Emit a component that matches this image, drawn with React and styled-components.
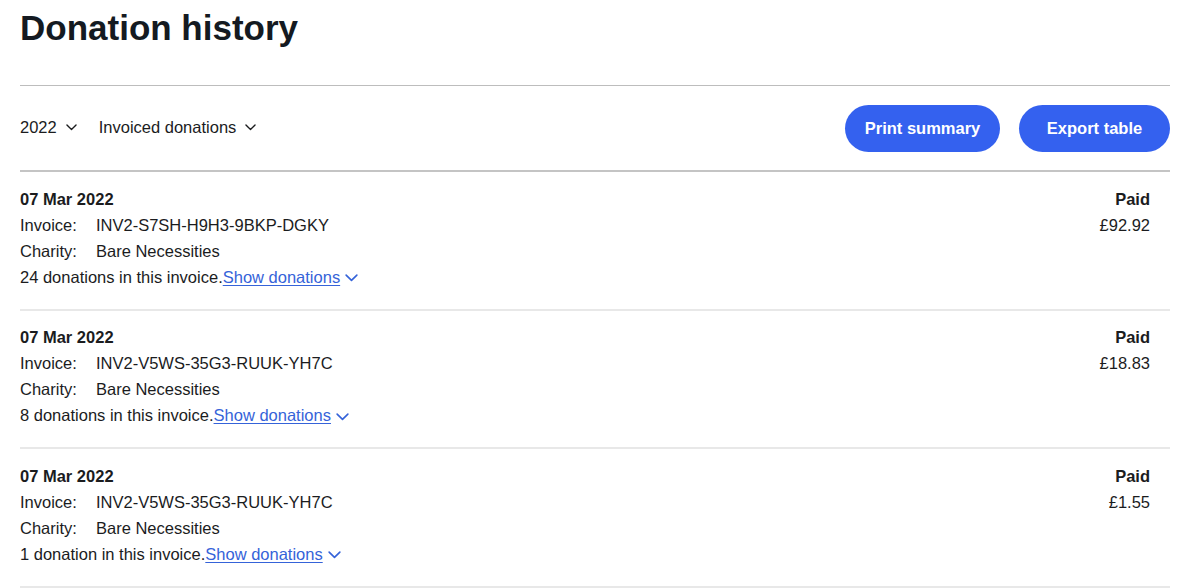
import React from 'react';
import styled, { createGlobalStyle } from 'styled-components';

const GlobalStyle = createGlobalStyle`
  html, body {
    margin: 0;
    padding: 0;
    background: #fff;
  }
  body {
    font-family: "Liberation Sans", Arial, sans-serif;
    color: #1b1c1e;
  }
`;

const Page = styled.div`
  padding: 0 30px 0 20px;
`;

const Title = styled.h1`
  margin: 0;
  padding-top: 7px;
  font-size: 35px;
  line-height: 42px;
  font-weight: 700;
  color: #141a21;
`;

const Toolbar = styled.div`
  margin-top: 36px;
  border-top: 1px solid #bdbdbd;
  border-bottom: 2px solid #c4c4c4;
  display: flex;
  align-items: center;
  justify-content: space-between;
  padding: 19px 0 18px;
`;

const Filters = styled.div`
  display: flex;
  align-items: center;
  gap: 22px;
  padding-bottom: 2px;
`;

const Filter = styled.button`
  display: flex;
  align-items: center;
  gap: 9px;
  border: 0;
  background: none;
  padding: 0;
  font-family: inherit;
  font-size: 16.5px;
  color: #1b1c1e;
  cursor: pointer;
`;

const Actions = styled.div`
  display: flex;
  gap: 19px;
`;

const PillButton = styled.button`
  height: 47px;
  padding: 0;
  border: 0;
  border-radius: 24px;
  background: #3461ef;
  color: #fff;
  font-family: inherit;
  font-size: 16.5px;
  font-weight: 700;
  white-space: nowrap;
  cursor: pointer;
  width: ${({ $w }) => $w}px;
`;

const Row = styled.div`
  display: flex;
  justify-content: space-between;
  padding: 13.5px 20px 19px 0;
  border-bottom: 2px solid #e8e8e8;
  font-size: 16.5px;
  line-height: 26px;
`;

const Details = styled.div`
  display: flex;
  flex-direction: column;
`;

const DateLine = styled.div`
  font-weight: 700;
`;

const Field = styled.div`
  display: flex;
`;

const Label = styled.span`
  width: 76px;
`;

const Link = styled.a`
  color: #3563d9;
  text-decoration: underline;
  text-underline-offset: 2px;
  cursor: pointer;
`;

const LinkChevron = styled.span`
  display: inline-flex;
  margin-left: 5px;
  vertical-align: middle;
  color: #3563d9;
`;

const Amount = styled.div`
  display: flex;
  flex-direction: column;
  align-items: flex-end;
`;

const Status = styled.div`
  font-weight: 700;
`;

const Chevron = ({ size = 12, color = 'currentColor' }) => (
  <svg width={size} height={size * 0.62} viewBox="0 0 12 7.5" fill="none">
    <polyline points="1,1 6,6 11,1" stroke={color} strokeWidth="1.5" strokeLinecap="round" strokeLinejoin="round" />
  </svg>
);

const invoices = [
  { id: 'INV2-S7SH-H9H3-9BKP-DGKY', count: '24 donations', amount: '£92.92' },
  { id: 'INV2-V5WS-35G3-RUUK-YH7C', count: '8 donations', amount: '£18.83' },
  { id: 'INV2-V5WS-35G3-RUUK-YH7C', count: '1 donation', amount: '£1.55' },
];

const App = () => (
  <>
    <GlobalStyle />
    <Page>
      <Title>Donation history</Title>
      <Toolbar>
        <Filters>
          <Filter>
            2022 <Chevron size={11} />
          </Filter>
          <Filter>
            Invoiced donations <Chevron size={11} />
          </Filter>
        </Filters>
        <Actions>
          <PillButton $w={155}>Print summary</PillButton>
          <PillButton $w={151}>Export table</PillButton>
        </Actions>
      </Toolbar>
      {invoices.map((inv, i) => (
        <Row key={i}>
          <Details>
            <DateLine>07 Mar 2022</DateLine>
            <Field>
              <Label>Invoice:</Label>
              <span>{inv.id}</span>
            </Field>
            <Field>
              <Label>Charity:</Label>
              <span>Bare Necessities</span>
            </Field>
            <div>
              {inv.count} in this invoice.
              <Link>Show donations</Link>
              <LinkChevron>
                <Chevron size={13} />
              </LinkChevron>
            </div>
          </Details>
          <Amount>
            <Status>Paid</Status>
            <div>{inv.amount}</div>
          </Amount>
        </Row>
      ))}
    </Page>
  </>
);

export default App;
